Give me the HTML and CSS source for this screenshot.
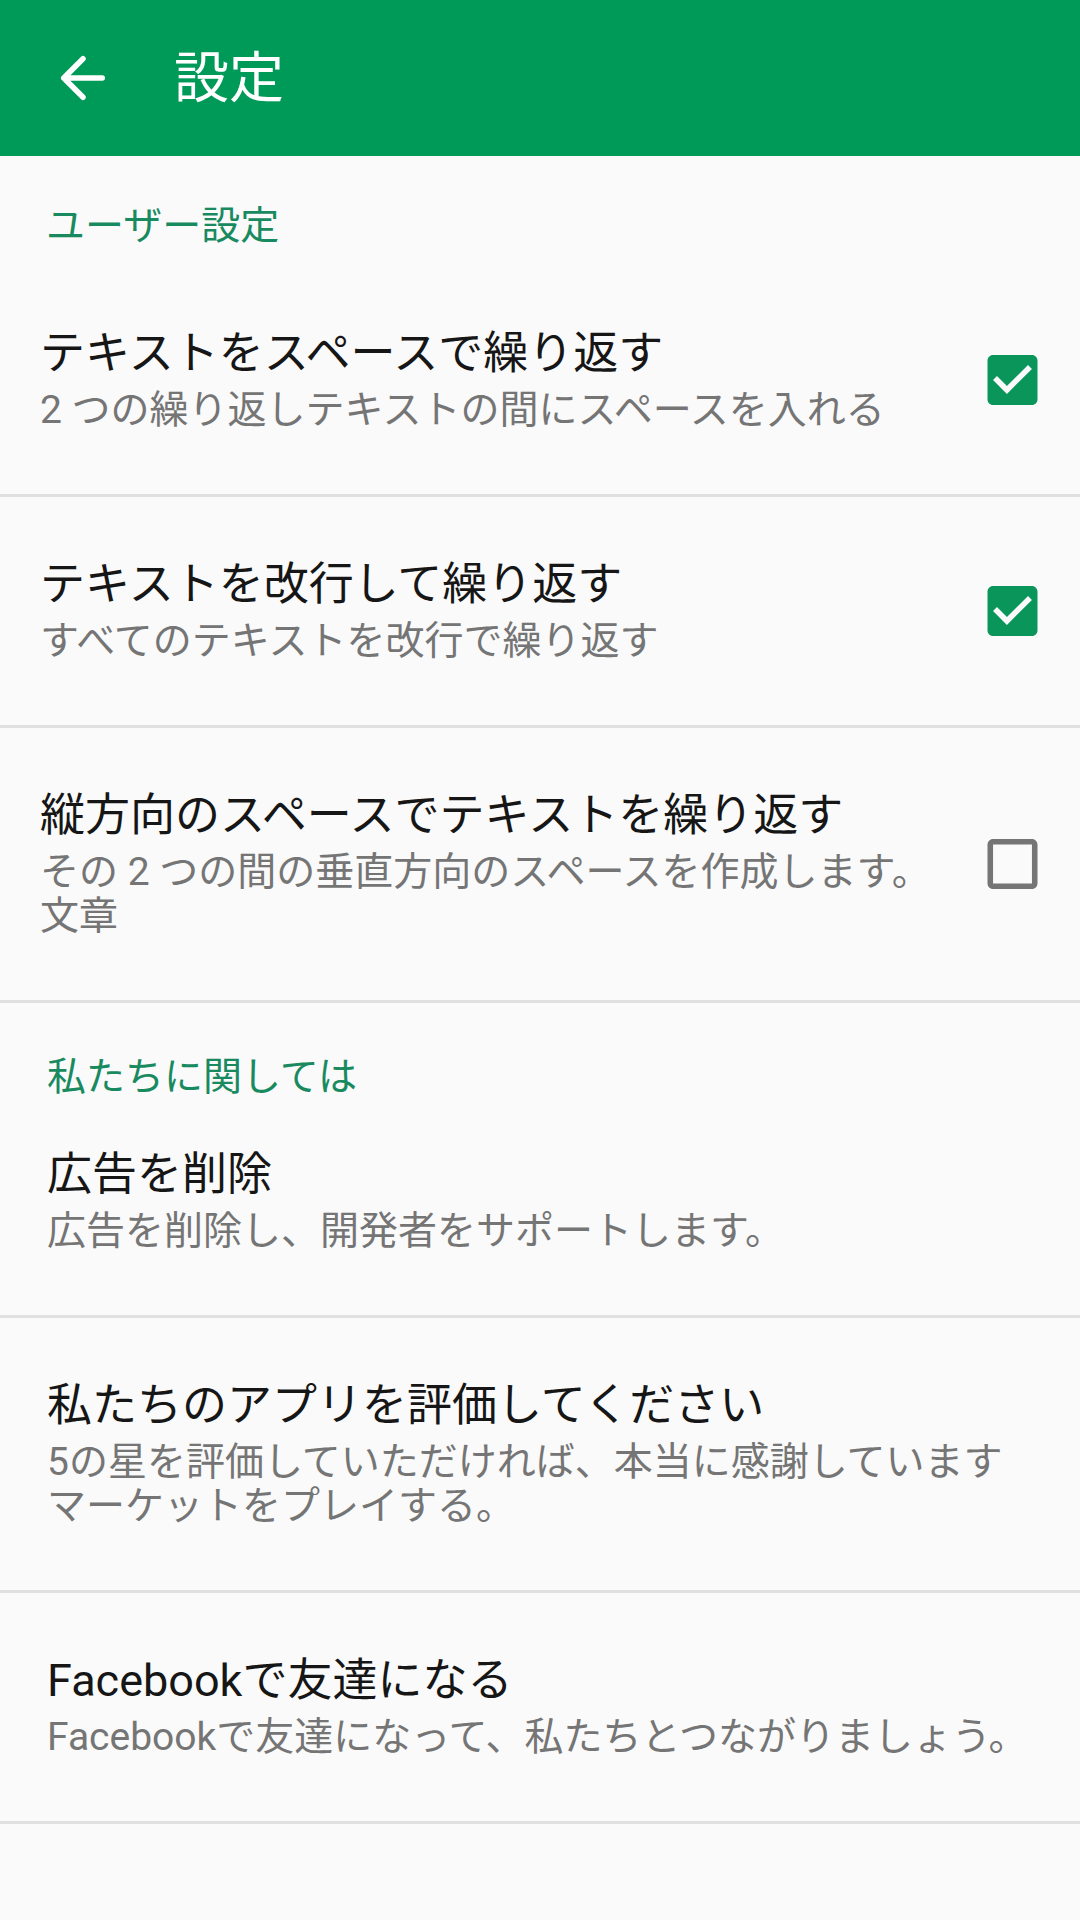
FILE: index.html
```html
<!DOCTYPE html>
<html lang="ja">
<head>
  <meta charset="UTF-8">
  <meta name="viewport" content="width=device-width, initial-scale=1.0">
  <title>設定</title>
  <link rel="stylesheet" href="styles.css">
</head>
<body>
  <header class="toolbar">
    <!-- back arrow -->
    <svg class="back" viewBox="0 0 24 24" width="66" height="66">
      <path d="M5 12H19M12 5L5 12L12 19" fill="none" stroke="#fff" stroke-width="2" stroke-linecap="round" stroke-linejoin="round"/>
    </svg>
    <h1>設定</h1>
  </header>

  <main>
    <!-- user settings -->
    <section class="group user">
      <h2 class="cat">ユーザー設定</h2>

      <div class="row">
        <div class="row-text">
          <div class="title">テキストをスペースで繰り返す</div>
          <div class="summary">2 つの繰り返しテキストの間にスペースを入れる</div>
        </div>
        <svg class="check" viewBox="3 3 18 18">
          <path fill="#0a965a" d="M19 3H5c-1.11 0-2 .9-2 2v14c0 1.1.89 2 2 2h14c1.11 0 2-.9 2-2V5c0-1.1-.89-2-2-2zm-9 14l-5-5 1.41-1.41L10 14.170l7.59-7.59L19 8l-9 9z"/>
        </svg>
      </div>

      <div class="row">
        <div class="row-text">
          <div class="title">テキストを改行して繰り返す</div>
          <div class="summary">すべてのテキストを改行で繰り返す</div>
        </div>
        <svg class="check" viewBox="3 3 18 18">
          <path fill="#0a965a" d="M19 3H5c-1.11 0-2 .9-2 2v14c0 1.1.89 2 2 2h14c1.11 0 2-.9 2-2V5c0-1.1-.89-2-2-2zm-9 14l-5-5 1.41-1.41L10 14.17l7.59-7.59L19 8l-9 9z"/>
        </svg>
      </div>

      <div class="row">
        <div class="row-text">
          <div class="title">縦方向のスペースでテキストを繰り返す</div>
          <div class="summary">その 2 つの間の垂直方向のスペースを作成します。文章</div>
        </div>
        <svg class="check" viewBox="3 3 18 18">
          <path fill="#757575" d="M19 5v14H5V5h14m0-2H5c-1.1 0-2 .9-2 2v14c0 1.1.9 2 2 2h14c1.1 0 2-.9 2-2V5c0-1.1-.9-2-2-2z"/>
        </svg>
      </div>
    </section>

    <!-- about us -->
    <section class="group about">
      <h2 class="cat">私たちに関しては</h2>

      <div class="row first">
        <div class="row-text">
          <div class="title">広告を削除</div>
          <div class="summary">広告を削除し、開発者をサポートします。</div>
        </div>
      </div>

      <div class="row">
        <div class="row-text">
          <div class="title">私たちのアプリを評価してください</div>
          <div class="summary">5の星を評価していただければ、本当に感謝しています<br>マーケットをプレイする。</div>
        </div>
      </div>

      <div class="row">
        <div class="row-text">
          <div class="title">Facebookで友達になる</div>
          <div class="summary">Facebookで友達になって、私たちとつながりましょう。</div>
        </div>
      </div>
    </section>
  </main>
</body>
</html>
```

FILE: styles.css
```css
body {
  margin: 0;
  padding: 0;
  width: 1080px;
  min-height: 1920px;
  background-color: #fafafa;
  font-family: Roboto, "Noto Sans CJK JP", sans-serif;
}

.toolbar {
  display: flex;
  align-items: center;
  height: 156px;
  padding-left: 50px;
  background-color: #009a58;
  color: white;
}

.toolbar .back {
  flex-shrink: 0;
}

.toolbar h1 {
  margin: 0 0 0 58px;
  font-size: 55px;
  font-weight: 400;
  line-height: 66px;
}

.cat {
  margin: 0;
  padding: 48px 0 18px 46px;
  font-size: 39px;
  font-weight: 400;
  line-height: 44px;
  color: #198a60;
}

.about .cat {
  padding: 52px 0 0 47px;
}

.row {
  display: flex;
  align-items: center;
  padding: 62px 42px 62px 40px;
  border-bottom: 3px solid #e0e0e0;
}

.about .row {
  padding-left: 47px;
  padding-right: 44px;
}

.about .row.first {
  padding-top: 50px;
}

.row-text {
  flex: 1;
}

.title {
  font-size: 45px;
  line-height: 52px;
  color: #161616;
}

.summary {
  margin-top: 8px;
  font-size: 39px;
  line-height: 44px;
  color: #757575;
}

.check {
  flex-shrink: 0;
  width: 51px;
  height: 50px;
  margin-left: 36px;
}
```
